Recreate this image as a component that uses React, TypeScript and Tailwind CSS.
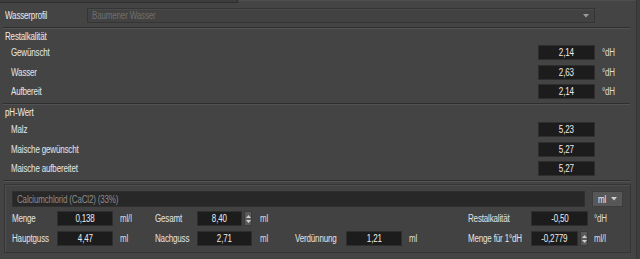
import React from "react";

const font = { fontFamily: '"Liberation Sans", Arial, sans-serif' };

function T({ children, c = "origin-left" }: { children: React.ReactNode; c?: string }) {
  return <span className={`inline-block whitespace-nowrap scale-x-[0.8] ${c}`}>{children}</span>;
}

function VBox({ v, w }: { v: string; w: string }) {
  return (
    <div className={`${w} h-[15px] bg-[#1c1c1c] border border-[#2e2e2e] flex items-center justify-center text-[#ececec]`}>
      <T c="origin-center">{v}</T>
    </div>
  );
}

function Spinner() {
  return (
    <div className="w-[8px] h-[15px] bg-[#5a5a5a] border border-[#3a3a3a] flex flex-col items-center justify-center gap-[2px]">
      <svg width="5" height="3" viewBox="0 0 5 3"><path d="M0 3 L2.5 0 L5 3 Z" fill="#cfcfcf" /></svg>
      <svg width="5" height="3" viewBox="0 0 5 3"><path d="M0 0 L2.5 3 L5 0 Z" fill="#cfcfcf" /></svg>
    </div>
  );
}

function Sep() {
  return (
    <div className="ml-[3px] w-[627px] h-[2px] border-t border-[#2f2f2f] border-b border-b-[#535353]" />
  );
}

function Row({ label, v, unit }: { label: string; v: string; unit?: string }) {
  return (
    <div className="flex items-center h-[15px]">
      <div className="pl-[11px] w-[538px] text-[#e6e6e6]"><T>{label}</T></div>
      <VBox v={v} w="w-[57px]" />
      {unit && <div className="pl-[7px] text-[#dcdcdc]"><T>{unit}</T></div>}
    </div>
  );
}

export default function App() {
  const lbl = "text-[#e2e2e2] flex items-center";
  const unit = "text-[#dcdcdc] flex items-center";
  return (
    <div style={font} className="w-[640px] h-[259px] bg-[#444444] flex text-[10px] tracking-[-0.2px] overflow-hidden">
      <div className="w-[637px] h-full border-r border-[#353535] flex flex-col">
        {/* top strip */}
        <div className="h-[3px] flex">
          <div className="w-[238px] h-[3px] border-b border-[#2e2e2e] border-r bg-[#3d3d3d]" />
          <div className="flex-1 h-[1px] bg-[#4e4e4e]" />
        </div>
        {/* Wasserprofil */}
        <div className="mt-[5px] flex items-center h-[15px]">
          <div className="pl-[5px] w-[87px] text-[#ececec]"><T>Wasserprofil</T></div>
          <div className="w-[508px] h-[15px] bg-[#424242] border border-[#353535] shadow-[inset_0_1px_0_#4a4a4a] flex items-center justify-between pl-[4px] pr-[5px]">
            <span className="text-[#6f6f6f]"><T>Baumener Wasser</T></span>
            <svg width="6" height="4" viewBox="0 0 6 4"><path d="M0 0 L3 3.5 L6 0 Z" fill="#9a9a9a" /></svg>
          </div>
        </div>
        <div className="mt-[4px]"><Sep /></div>
        <div className="h-[15px] flex items-center pl-[5px] text-[#ececec]"><T>Restalkalität</T></div>
        <div className="mt-[1px] flex flex-col gap-[4.5px]">
          <Row label="Gewünscht" v="2,14" unit="°dH" />
          <Row label="Wasser" v="2,63" unit="°dH" />
          <Row label="Aufbereit" v="2,14" unit="°dH" />
        </div>
        <div className="mt-[4px]"><Sep /></div>
        <div className="h-[15px] flex items-center pl-[5px] text-[#ececec]"><T>pH-Wert</T></div>
        <div className="mt-[2px] flex flex-col gap-[4.5px]">
          <Row label="Malz" v="5,23" />
          <Row label="Maische gewünscht" v="5,27" />
          <Row label="Maische aufbereitet" v="5,27" />
        </div>
        <div className="mt-[4px]"><Sep /></div>
        {/* group box */}
        <div className="mt-[2px] ml-[4px] w-[627px] h-[69px] border border-[#353535] shadow-[inset_1px_1px_0_#4f4f4f] bg-[#424242] pt-[6px] pl-[7px] pr-[6px]">
          <div className="flex items-center gap-[7px]">
            <div className="w-[573px] h-[16px] bg-[#282828] border border-[#2f2f2f] flex items-center pl-[4px] text-[#8c8c8c]">
              <T>Calciumchlorid (CaCl2) (33%)</T>
            </div>
            <div className="w-[31px] h-[16px] bg-[#575757] border border-[#3c3c3c] flex items-center justify-between pl-[5px] pr-[5px] text-[#ececec]">
              <T>ml</T>
              <svg width="6" height="4" viewBox="0 0 6 4"><path d="M0 0 L3 3.5 L6 0 Z" fill="#d0d0d0" /></svg>
            </div>
          </div>
          <div className="mt-[4px] grid grid-cols-[45px_56px_42px_42px_55px_43px_51px_56px_66px_63px_57px_1fr] grid-rows-[15px_15px] gap-y-[5px]">
            <div className={lbl}><T>Menge</T></div>
            <VBox v="0,138" w="w-[56px]" />
            <div className={`${unit} pl-[7px]`}><T>ml/l</T></div>
            <div className={lbl}><T>Gesamt</T></div>
            <div className="flex gap-[2px]">
              <VBox v="8,40" w="w-[45px]" />
              <Spinner />
            </div>
            <div className={`${unit} pl-[8px]`}><T>ml</T></div>
            <div />
            <div />
            <div />
            <div className={lbl}><T>Restalkalität</T></div>
            <VBox v="-0,50" w="w-[57px]" />
            <div className={`${unit} pl-[6px]`}><T>°dH</T></div>

            <div className={lbl}><T>Hauptguss</T></div>
            <VBox v="4,47" w="w-[56px]" />
            <div className={`${unit} pl-[7px]`}><T>ml</T></div>
            <div className={lbl}><T>Nachguss</T></div>
            <VBox v="2,71" w="w-[55px]" />
            <div className={`${unit} pl-[8px]`}><T>ml</T></div>
            <div className={lbl}><T>Verdünnung</T></div>
            <VBox v="1,21" w="w-[56px]" />
            <div className={`${unit} pl-[7px]`}><T>ml</T></div>
            <div className={lbl}><T>Menge für 1°dH</T></div>
            <div className="flex gap-[2px]">
              <VBox v="-0,2779" w="w-[47px]" />
              <Spinner />
            </div>
            <div className={`${unit} pl-[6px]`}><T>ml/l</T></div>
          </div>
        </div>
      </div>
      <div className="flex-1 bg-[#3e3e3e]" />
    </div>
  );
}
